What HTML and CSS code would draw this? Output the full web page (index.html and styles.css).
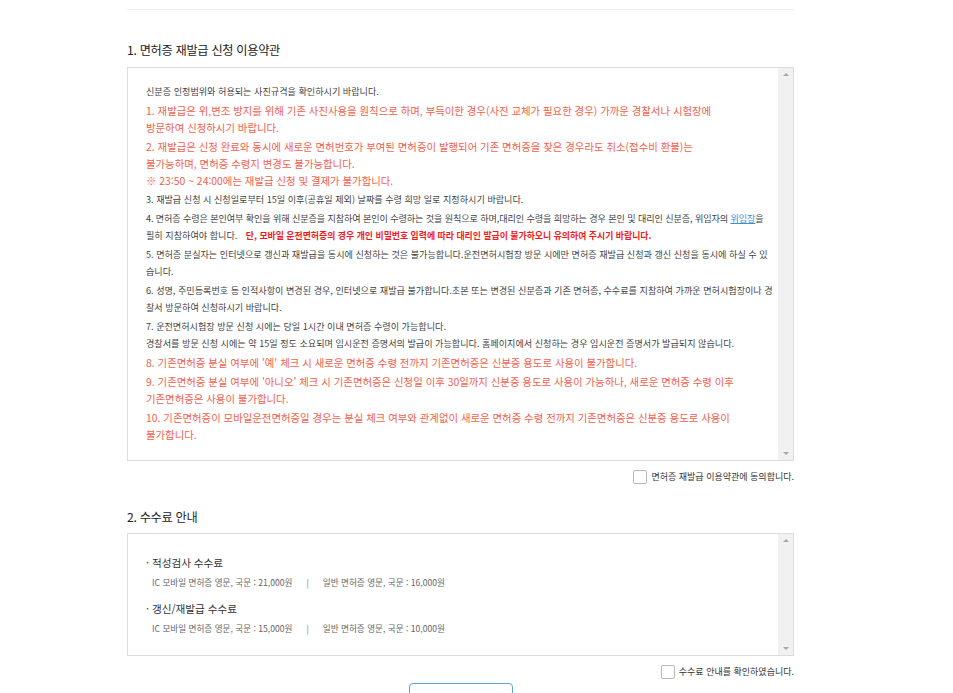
FILE: index.html
```html
<!DOCTYPE html>
<html lang="ko">
<head>
<meta charset="utf-8">
<title>면허증 재발급 신청</title>
<link rel="stylesheet" href="styles.css">
</head>
<body>
<div class="wrap">
  <div class="topline"></div>

  <h2 class="sec-title">1. 면허증 재발급 신청 이용약관</h2>
  <div class="box box-terms">
    <div class="box-body">
      <p class="s">신분증 인정범위와 허용되는 사진규격을 확인하시기 바랍니다.</p>
      <p class="r">1. 재발급은 위,변조 방지를 위해 기존 사진사용을 원칙으로 하며, 부득이한 경우(사진 교체가 필요한 경우) 가까운 경찰서나 시험장에<br>방문하여 신청하시기 바랍니다.</p>
      <p class="r">2. 재발급은 신청 완료와 동시에 새로운 면허번호가 부여된 면허증이 발행되어 기존 면허증을 찾은 경우라도 취소(접수비 환불)는<br>불가능하며, 면허증 수령지 변경도 불가능합니다.<br>※ 23:50 ~ 24:00에는 재발급 신청 및 결제가 불가합니다.</p>
      <p class="s">3. 재발급 신청 시 신청일로부터 15일 이후(공휴일 제외) 날짜를 수령 희망 일로 지정하시기 바랍니다.</p>
      <p class="s"><span class="tight">4. 면허증 수령은 본인여부 확인을 위해 신분증을 지참하여 본인이 수령하는 것을 원칙으로 하며,대리인 수령을 희망하는 경우 본인 및 대리인 신분증, 위임자의 <a class="link" href="#">위임장</a>을</span><br>필히 지참하여야 합니다. <strong class="warn">단, 모바일 운전면허증의 경우 개인 비밀번호 입력에 따라 대리인 발급이 불가하오니 유의하여 주시기 바랍니다.</strong></p>
      <p class="s">5. 면허증 분실자는 인터넷으로 갱신과 재발급을 동시에 신청하는 것은 불가능합니다.운전면허시험장 방문 시에만 면허증 재발급 신청과 갱신 신청을 동시에 하실 수 있<br>습니다.</p>
      <p class="s">6. 성명, 주민등록번호 등 인적사항이 변경된 경우, 인터넷으로 재발급 불가합니다.초본 또는 변경된 신분증과 기존 면허증, 수수료를 지참하여 가까운 면허시험장이나 경<br>찰서 방문하여 신청하시기 바랍니다.</p>
      <p class="s">7. 운전면허시험장 방문 신청 시에는 당일 1시간 이내 면허증 수령이 가능합니다.<br>경찰서를 방문 신청 시에는 약 15일 정도 소요되며 임시운전 증명서의 발급이 가능합니다. 홈페이지에서 신청하는 경우 임시운전 증명서가 발급되지 않습니다.</p>
      <p class="r">8. 기존면허증 분실 여부에 '예' 체크 시 새로운 면허증 수령 전까지 기존면허증은 신분증 용도로 사용이 불가합니다.</p>
      <p class="r">9. 기존면허증 분실 여부에 '아니오' 체크 시 기존면허증은 신청일 이후 30일까지 신분증 용도로 사용이 가능하나, 새로운 면허증 수령 이후<br>기존면허증은 사용이 불가합니다.</p>
      <p class="r">10. 기존면허증이 모바일운전면허증일 경우는 분실 체크 여부와 관계없이 새로운 면허증 수령 전까지 기존면허증은 신분증 용도로 사용이<br>불가합니다.</p>
    </div>
    <div class="sbar"><span class="arr up"></span><span class="arr down"></span></div>
  </div>
  <label class="agree"><span class="chk"></span><span>면허증 재발급 이용약관에 동의합니다.</span></label>

  <h2 class="sec-title sec2">2. 수수료 안내</h2>
  <div class="box box-fee">
    <div class="box-body fee-body">
      <p class="fee-h">· 적성검사 수수료</p>
      <p class="fee-d">IC 모바일 면허증 영문, 국문 : 21,000원<span class="sep">|</span>일반 면허증 영문, 국문 : 16,000원</p>
      <p class="fee-h">· 갱신/재발급 수수료</p>
      <p class="fee-d">IC 모바일 면허증 영문, 국문 : 15,000원<span class="sep">|</span>일반 면허증 영문, 국문 : 10,000원</p>
    </div>
    <div class="sbar"><span class="arr up"></span><span class="arr down"></span></div>
  </div>
  <label class="agree agree2"><span class="chk"></span><span>수수료 안내를 확인하였습니다.</span></label>

  <div class="btn-row"><button class="btn" type="button" aria-label="다음"></button></div>
</div>
</body>
</html>
```
FILE: styles.css
```css
html, body {
  margin: 0;
  padding: 0;
  background: #ffffff;
}
body {
  padding-top: 9px;
  font-family: "Noto Sans CJK KR", "Noto Sans", sans-serif;
  color: #333;
}
.wrap {
  width: 667px;
  margin-left: 127px;
}
.topline {
  border-top: 1px solid #ececec;
}
.sec-title {
  margin: 30px 0 7px;
  font-size: 12.2px;
  line-height: 20px;
  font-weight: 400;
  letter-spacing: -0.3px;
  color: #222;
}
.sec2 {
  margin-top: 22px;
  margin-bottom: 6px;
}
.box {
  display: flex;
  border: 1px solid #dcdcdc;
  box-sizing: border-box;
  background: #fff;
}
.box-terms { height: 394px; }
.box-fee { height: 123px; }
.box-body {
  flex: 1;
  padding: 15px 0 0 18px;
  overflow: hidden;
}
.box-body p {
  margin: 0 0 2px;
  line-height: 17px;
  white-space: nowrap;
}
.s {
  font-size: 9.1px;
  color: #3f3f3f;
}
.tight {
  letter-spacing: -0.1px;
}
.r {
  font-size: 10.4px;
  color: #f0614e;
}
.link {
  color: #3d8fd8;
  text-decoration: underline;
}
.warn {
  color: #ee1b1b;
  font-weight: 700;
  font-size: 8.9px;
  margin-left: 6px;
}
.sbar {
  width: 15px;
  background: #f1f1f1;
  display: flex;
  flex-direction: column;
  justify-content: space-between;
  align-items: center;
  padding: 5px 0;
}
.arr {
  width: 0;
  height: 0;
  border-left: 3px solid transparent;
  border-right: 3px solid transparent;
}
.arr.up { border-bottom: 3px solid #a8a8a8; }
.arr.down { border-top: 3px solid #a8a8a8; }
.agree {
  display: flex;
  justify-content: flex-end;
  align-items: center;
  gap: 4px;
  height: 17px;
  margin-top: 7px;
  font-size: 9px;
  color: #333;
}
.chk {
  width: 12px;
  height: 12px;
  border: 1px solid #b9b9b9;
  border-radius: 2px;
  background: #fff;
}
.fee-body {
  padding-top: 20px;
}
.fee-body p.fee-h {
  font-size: 10.6px;
  color: #333;
  margin: 0 0 3px;
}
.fee-body p.fee-d {
  font-size: 8.6px;
  color: #666;
  padding-left: 6px;
  margin: 0 0 9px;
}
.sep {
  margin: 0 14px;
  color: #777;
}
.btn-row {
  display: flex;
  justify-content: center;
  margin-top: 3px;
}
.btn {
  width: 104px;
  height: 38px;
  border: 1px solid #5ba3d9;
  border-radius: 4px;
  background: #fff;
}
```
